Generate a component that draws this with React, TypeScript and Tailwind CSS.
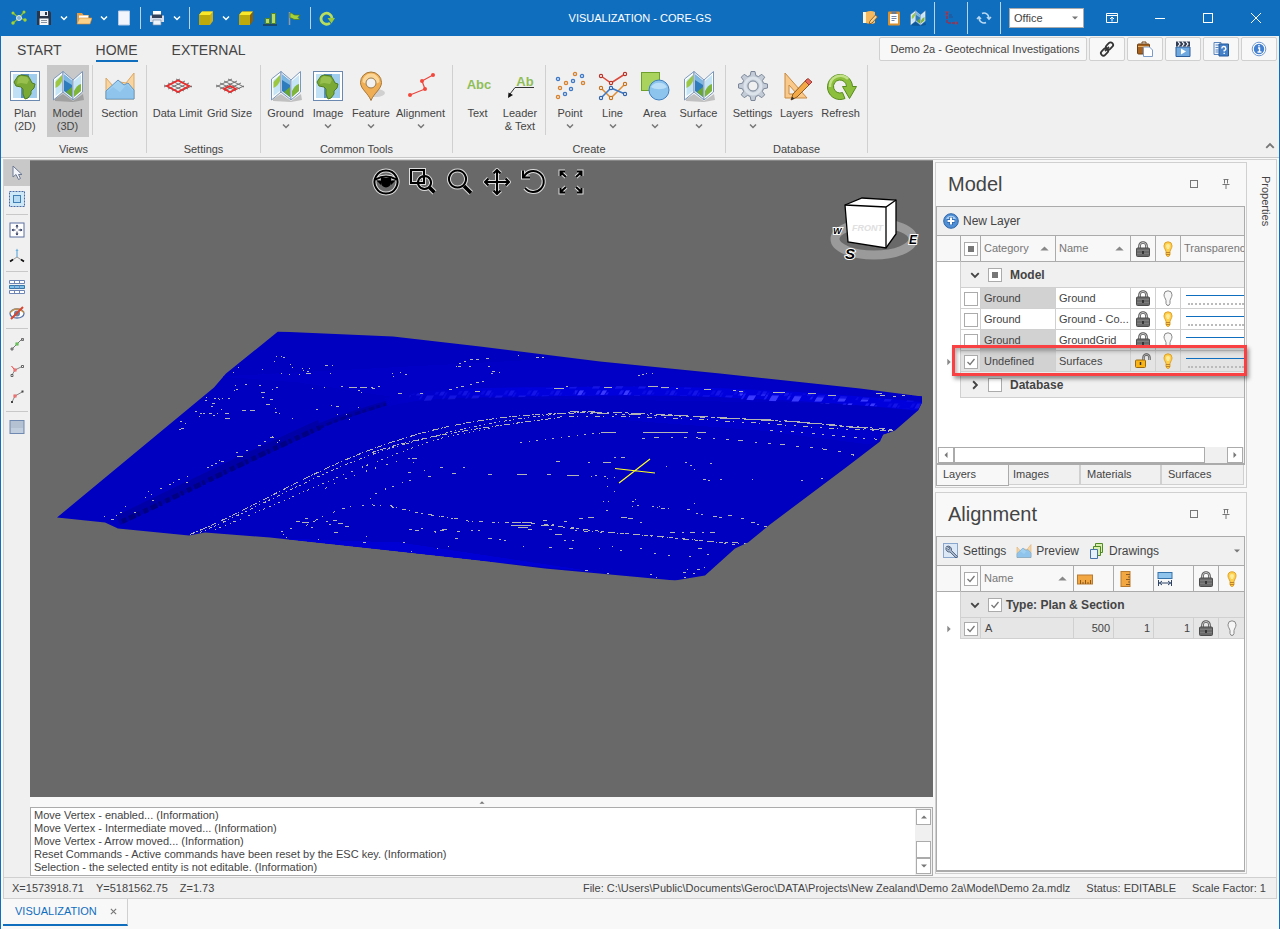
import React from "react";

type IconProps = { className?: string };

const Chevron = ({ className = "size-2" }: IconProps) => (
  <svg viewBox="0 0 8 8" className={className} fill="none" stroke="currentColor" strokeWidth="1.5">
    <path d="M1 2.5 4 5.5 7 2.5" />
  </svg>
);

const Arrow = ({ className }: IconProps) => (
  <svg viewBox="0 0 10 6" className={className} fill="currentColor">
    <path d="M0 5.5 5 .5l5 5z" />
  </svg>
);

/* ---------- ribbon icons ---------- */

const MapIcon = ({ className = "size-8" }: IconProps) => (
  <svg viewBox="0 0 32 32" className={className}>
    <path d="M3 29 L11 24 L21 31 L31 24 L32 30 L21 32 L3 31z" fill="#0003" />
    <path d="M1.5 9 11 1.5 V22 L1.5 30z" fill="#fafcfe" stroke="#7b97ba" />
    <path d="M11 1.5 21 10 V30 L11 22z" fill="#e6eef7" stroke="#7b97ba" />
    <path d="M21 10 30.5 1.5 V22 L21 30z" fill="#fafcfe" stroke="#7b97ba" />
    <path d="M3.500 10 10 5 V21 L3.500 26z" fill="#c5e4f6" />
    <path d="M3.500 12 10 5 V11 Q8 16 3.500 18z" fill="#9cc742" />
    <path d="M12 4.500 20 11 V27 L12 21z" fill="#2f7cbc" />
    <path d="M12 4.500 20 11 V15 L12 10z" fill="#7db8e3" />
    <path d="M22 11 29 5 V21 L22 27z" fill="#c5e4f6" />
    <path d="M22 21 Q25 15 29 14 V21 L22 27z" fill="#7fb53a" />
    <path d="M14 22 20 17 V27z" fill="#6aa634" />
  </svg>
);

const AfricaIcon = ({ className = "size-8" }: IconProps) => (
  <svg viewBox="0 0 32 32" className={className}>
    <rect x="1.500" y="1.500" width="29" height="29" fill="#fff" stroke="#6b88b0" />
    <rect x="4" y="4" width="24" height="24" fill="#9fcdee" />
    <path d="M4 4h8v24H4z" fill="#bfe0f5" />
    <path d="M12 4h8v24h-8z" fill="#5f93bf" />
    <path
      d="M9 6 12 5l7 1 2 3 2 4 3 1-1 4-3 3v3l-3 4-3 1-2-5v-5l-2-2-5-1-2-4z"
      fill="#7aa935"
      stroke="#4f7c20"
    />
    <path d="M9 8l3-2 6 1 2 3-2 4-6-1-4 1z" fill="#98c04e" />
  </svg>
);

const SectionIcon = ({ className = "size-8" }: IconProps) => (
  <svg viewBox="0 0 32 32" className={className}>
    <path d="M2 8 9 16 16 12 22 13 30 3V29H2z" fill="#f8d5a0" stroke="#dca763" />
    <path d="M2 21 14 10 20 15 24 13 30 20V29H2z" fill="#9fd0f2" stroke="#5d96c8" />
    <path d="M3 22 9 17 16 22 23 14 29 21V28H3z" fill="#86bde8" opacity=".6" />
  </svg>
);

// outer: the border of the whole grid is red, otherwise only one cell is
const GridIcon = ({ outer }: { outer?: boolean }) => (
  <svg viewBox="0 0 32 32" className="size-8" fill="none" stroke="#666" strokeWidth=".9">
    <path d="M2 17 18 9M6 19 23 11M10 21 27 13M14 23 30 16M2 15 18 23M6 13 22 21M10 11 26 19M14 9 30 17" />
    {outer ? (
      <path d="M5 16 16 10.500 27 16 16 22z" stroke="#ee2a2a" strokeWidth="1.600" />
    ) : (
      <path d="M10 19 16 16 22 19 16 22z" stroke="#ee2a2a" strokeWidth="1.600" />
    )}
  </svg>
);

const PinIcon = () => (
  <svg viewBox="0 0 32 32" className="size-8">
    <ellipse cx="21" cy="23" rx="9" ry="4" fill="#0002" />
    <path d="M16 30.500C13 23 5.500 19 5.500 12.500a10.500 10.500 0 0 1 21 0c0 6.500-7.500 10.500-10.500 18z" fill="#efae54" stroke="#a5773a" />
    <path d="M7.500 12a8.500 8.500 0 0 1 17 0c-4 3-13 3-17 0z" fill="#fad699" />
    <circle cx="16" cy="13" r="5" fill="#f2f2f2" stroke="#9a7a4a" />
  </svg>
);

const AlignmentIcon = () => (
  <svg viewBox="0 0 32 32" className="size-8">
    <path d="M5 25 20 19 17 11 28 5" fill="none" stroke="#e8453c" strokeWidth="1.200" />
    <g fill="#f4473c">
      <circle cx="5" cy="25" r="2" />
      <circle cx="20" cy="19" r="2" />
      <circle cx="17" cy="11" r="2" />
      <circle cx="28" cy="5" r="2" />
    </g>
  </svg>
);

const AbcIcon = () => (
  <svg viewBox="0 0 32 32" className="size-8">
    <text x="17" y="19" textAnchor="middle" fontSize="13" fontWeight="700" fill="#8fbe57" fontFamily="Liberation Sans, sans-serif">
      Abc
    </text>
  </svg>
);

const LeaderIcon = () => (
  <svg viewBox="0 0 32 32" className="size-8">
    <text x="21" y="16" textAnchor="middle" fontSize="13" fontWeight="700" fill="#8fbe57" fontFamily="Liberation Sans, sans-serif">
      Ab
    </text>
    <path d="M30 17.500H11L6 24" fill="none" stroke="#333" />
    <path d="M4 28 4.500 22.500 9 25z" fill="#111" />
  </svg>
);

const points: [number, number, string][] = [
  [4, 9, "#3f78c4"], [21, 4, "#d9822b"], [28, 6, "#3f78c4"], [12, 13, "#d9822b"], [19, 11, "#3f78c4"],
  [29, 13, "#d9822b"], [6, 18, "#d9822b"], [17, 19, "#3f78c4"], [4, 27, "#d9822b"], [11, 24, "#3f78c4"],
];

const PointIcon = () => (
  <svg viewBox="0 0 32 32" className="size-8">
    {points.map(([x, y, c]) => (
      <circle key={`${x}-${y}`} cx={x} cy={y} r="1.600" fill="#dfe8f4" stroke={c} strokeWidth="1.300" />
    ))}
  </svg>
);

const LineIcon = () => (
  <svg viewBox="0 0 32 32" className="size-8" fill="none" strokeWidth="1.500">
    <path d="M4 6 14 13 28 4" stroke="#d9493c" />
    <path d="M4 18 14 28 28 14" stroke="#e08d35" />
    <path d="M4 28 14 18 28 24" stroke="#3f78c4" />
    <g fill="#fff" strokeWidth="1.200">
      <g stroke="#b53228">
        <circle cx="4" cy="6" r="1.600" /><circle cx="14" cy="13" r="1.600" /><circle cx="28" cy="4" r="1.600" />
      </g>
      <g stroke="#c5721f">
        <circle cx="4" cy="18" r="1.600" /><circle cx="14" cy="28" r="1.600" /><circle cx="28" cy="14" r="1.600" />
      </g>
      <g stroke="#2f62a8">
        <circle cx="4" cy="28" r="1.600" /><circle cx="14" cy="18" r="1.600" /><circle cx="28" cy="24" r="1.600" />
      </g>
    </g>
  </svg>
);

const AreaIcon = () => (
  <svg viewBox="0 0 32 32" className="size-8">
    <rect x="2.500" y="2.500" width="18" height="18" fill="#a9d35c" stroke="#6fa02b" />
    <circle cx="20" cy="20" r="10" fill="#8cc4ee" stroke="#3f7fc0" />
    <path d="M12 17a9 8 0 0 1 16 0c-4 3-12 3-16 0z" fill="#b9def7" />
  </svg>
);

const GearIcon = () => (
  <svg viewBox="0 0 32 32" className="size-8">
    <g fill="#c3cbd6" stroke="#7b8798">
      <path d="M14 1.500h4l.8 4 2.600 1.100 3.400-2.300 2.900 2.900-2.300 3.400 1.100 2.600 4 .8v4l-4 .8-1.100 2.600 2.300 3.400-2.900 2.900-3.400-2.300-2.600 1.100-.8 4h-4l-.8-4-2.600-1.100-3.400 2.300-2.900-2.900 2.300-3.400-1.100-2.600-4-.8v-4l4-.8 1.100-2.600-2.300-3.400 2.900-2.900 3.400 2.300 2.600-1.100z" />
      <circle cx="16" cy="16" r="8" fill="none" stroke="#dde3ea" strokeWidth="3" />
      <circle cx="16" cy="16" r="5" fill="#f0f0f0" />
    </g>
  </svg>
);

const LayersIcon = () => (
  <svg viewBox="0 0 32 32" className="size-8">
    <path d="M4 3 26 28H4z" fill="#f9c98c" stroke="#c98a40" />
    <path d="M8 15 16 24H8z" fill="#f0f0f0" stroke="#c98a40" />
    <path d="M10 30 12 24 26 9 30 13 16 27z" fill="#f3a948" stroke="#8c5b22" />
    <path d="M24 11 27 8.500 31 12 28 15z" fill="#e46a5e" stroke="#a33d35" />
    <path d="M10 30 11 26.500 13.500 28.800z" fill="#333" />
  </svg>
);

const RefreshIcon = () => (
  <svg viewBox="0 0 32 32" className="size-8">
    <path
      d="M20 28.500A12.500 12.500 0 1 1 27.500 16.500H31.500L24.500 28.500 17.500 16.500H21.500A6.500 6.500 0 1 0 17.500 22.500z"
      fill="#8cbf3c"
      stroke="#568a1c"
    />
    <path d="M5 17a10.500 10.500 0 0 1 18-8" fill="none" stroke="#c3e187" strokeWidth="2.500" />
  </svg>
);

/* ---------- grid icons ---------- */

const Lock = () => (
  <svg viewBox="0 0 16 16" className="mx-auto size-4">
    <path d="M4.500 8V5a3.500 3.500 0 0 1 7 0v3" fill="none" stroke="#555" strokeWidth="2.600" />
    <path d="M4.500 8V5a3.500 3.500 0 0 1 7 0v3" fill="none" stroke="#ccc" />
    <rect x="1.500" y="7" width="13" height="8.500" rx="1" fill="#6b6b6b" stroke="#4c4c4c" />
    <path d="M2 9.500h12M2 12.500h12" stroke="#7d7d7d" />
    <path d="M8 10v3" stroke="#222" strokeWidth="1.500" />
  </svg>
);

const Unlock = () => (
  <svg viewBox="0 0 16 16" className="mx-auto size-4">
    <path d="M8.500 8V4.500a3 3 0 0 1 6 0V7" fill="none" stroke="#555" strokeWidth="2.400" />
    <path d="M8.500 8V4.500a3 3 0 0 1 6 0V7" fill="none" stroke="#ccc" strokeWidth=".8" />
    <rect x=".5" y="7" width="10" height="7.500" rx="1" fill="#fbb416" stroke="#9b6a10" />
    <path d="M5.500 9v3" stroke="#333" strokeWidth="1.500" />
  </svg>
);

const Bulb = ({ on }: { on?: boolean }) => (
  <svg viewBox="0 0 16 16" className="mx-auto size-4">
    <path
      d="M6 10.500C5.500 8.500 4 7 4 4.800a4 4 0 0 1 8 0c0 2.200-1.500 3.700-2 5.700v3L9 15.300H7l-1-1.800z"
      fill={on ? "#fdd04f" : "#f6f6f6"}
      stroke={on ? "#e0a22c" : "#888"}
    />
    {on && <path d="M6 5a2 2 0 0 1 4 0L9 8H7z" fill="#ffec9a" />}
    {on && <path d="M6 11.500h4M6 13.500h4" stroke="#c08428" />}
  </svg>
);

/* ---------- title bar ---------- */

const Sep = ({ className }: IconProps) => <span className={`w-px shrink-0 bg-white/70 ${className}`} />;

const ToolButton = ({ label, className = "w-6", children }: { label: string; className?: string; children: React.ReactNode }) => (
  <button type="button" aria-label={label} className={`flex h-full shrink-0 items-center justify-center ${className}`}>
    {children}
  </button>
);

const Cube = ({ side = "#8a7a06" }: { side?: string }) => (
  <svg viewBox="0 0 16 16" className="size-4">
    <path d="M1 5 4 1.500h11V11L12 15H1z" fill={side} />
    <path d="M1 5 4 1.500h11L12 5z" fill="#fbe72a" />
    <path d="M1 5h11v10H1z" fill="#bda90c" />
  </svg>
);

const TitleBar = () => (
  <header className="grid h-9 grid-cols-[1fr_auto_1fr] items-center bg-[#106ebe] text-white">
    <div className="flex h-full items-center pl-1.5">
      <ToolButton label="Network" className="w-[26px]">
        <svg viewBox="0 0 16 16" className="size-4">
          <path d="M8 8 2 3M8 8 13 2M8 8 2 13M8 8l7 2M8 8" stroke="#8fc31f" strokeWidth="1.200" />
          <circle cx="8" cy="8" r="2.500" fill="#7fb2df" stroke="#dceaf7" />
          <g fill="#a5d32a">
            <circle cx="2" cy="3" r="1.500" /><circle cx="13" cy="2" r="1.500" /><circle cx="2" cy="13" r="1.700" /><circle cx="14" cy="10" r="1.700" />
          </g>
        </svg>
      </ToolButton>
      <ToolButton label="Save">
        <svg viewBox="0 0 16 16" className="size-4">
          <path d="M1 1h12.500L15 2.500V15H1z" fill="#2a3647" />
          <path d="M4 1h8v5H4z" fill="#e8edf3" />
          <path d="M3.500 8.500h9V15h-9z" fill="#f4f6f8" />
          <path d="M5 10.500h6M5 12.500h6" stroke="#8793a3" />
          <path d="M9 2h2v3H9z" fill="#2a3647" />
        </svg>
      </ToolButton>
      <ToolButton label="Save options" className="w-4"><Chevron /></ToolButton>
      <ToolButton label="Open">
        <svg viewBox="0 0 16 16" className="size-4">
          <path d="M1 3h5l1.500 2H13v9H1z" fill="#e79a3c" />
          <path d="M3 5.500h9V9H3z" fill="#fff" />
          <path d="M3.500 8H16l-2 6H1z" fill="#fbd089" stroke="#d98b31" strokeWidth=".6" />
        </svg>
      </ToolButton>
      <ToolButton label="Open options" className="w-4"><Chevron /></ToolButton>
      <ToolButton label="New page">
        <svg viewBox="0 0 16 16" className="size-4"><path d="M2.500 1h11v14h-11z" fill="#f2f6fc" stroke="#b6cbe6" /></svg>
      </ToolButton>
      <Sep className="mx-1 h-[22px]" />
      <ToolButton label="Print">
        <svg viewBox="0 0 16 16" className="size-4">
          <path d="M4 1h8v5H4z" fill="#fff" />
          <path d="M1 5.500h14V12H1z" fill="#d5deea" />
          <path d="M3 4.500h10V8H3z" fill="#34425a" />
          <path d="M4 10h8v5H4z" fill="#eef3f9" stroke="#7d91ad" strokeWidth=".7" />
        </svg>
      </ToolButton>
      <ToolButton label="Print options" className="w-4"><Chevron /></ToolButton>
      <Sep className="mx-1 h-[22px]" />
      <ToolButton label="Solid"><Cube side="#c4b020" /></ToolButton>
      <ToolButton label="Solid options" className="w-4"><Chevron /></ToolButton>
      <ToolButton label="Block"><Cube side="#8a5f06" /></ToolButton>
      <ToolButton label="Bar chart">
        <svg viewBox="0 0 16 16" className="size-4">
          <path d="M3.500 8.500h4v5h-4zM9.500 3.500h4v10h-4z" fill="#b4db6c" stroke="#55851d" />
          <path d="M1 15h14" stroke="#222" />
        </svg>
      </ToolButton>
      <ToolButton label="Flag">
        <svg viewBox="0 0 16 16" className="size-4">
          <path d="M3.500 2v13" stroke="#8d9aa8" strokeWidth="1.500" />
          <path d="M4 3c3 0 3 2 5 2h5l-2 2.500 2 2H9C7 9.500 7 8 4 8z" fill="#a4d03c" stroke="#4e7a12" strokeWidth=".7" />
        </svg>
      </ToolButton>
      <Sep className="mx-1 h-[22px]" />
      <ToolButton label="Refresh">
        <svg viewBox="0 0 16 16" className="size-4">
          <path d="M11 13A5.500 5.500 0 1 1 13 8" fill="none" stroke="#b9dd5c" strokeWidth="2.800" />
          <path d="M8.500 8h7.500l-3.500 5.500z" fill="#9cca35" />
        </svg>
      </ToolButton>
    </div>

    <h1>VISUALIZATION - CORE-GS</h1>

    <div className="flex h-full items-center justify-end">
      <ToolButton label="Edit data">
        <svg viewBox="0 0 16 16" className="size-4">
          <path d="M1 2h7v11H1z" fill="#fff3d6" />
          <path d="M4 2q5-2 9 0v11q-4 2-9 0z" fill="#f4b95e" />
          <path d="M7 14 8 11 13.500 5 15.500 7 10 13z" fill="#f8d28c" stroke="#7b4f1c" strokeWidth=".8" />
        </svg>
      </ToolButton>
      <ToolButton label="Clipboard">
        <svg viewBox="0 0 16 16" className="size-4">
          <rect x="2" y="1.500" width="12" height="14" rx="1" fill="#d9902f" />
          <path d="M4 4h8v9.500H4z" fill="#fff" />
          <path d="M5.500 1h5v3h-5z" fill="#6c7c90" />
          <path d="M5.500 6.500h5M5.500 8.500h5M5.500 10.500h3" stroke="#7089ab" />
        </svg>
      </ToolButton>
      <ToolButton label="Map"><MapIcon className="size-4" /></ToolButton>
      <Sep className="ml-1 h-8" />
      <ToolButton label="Legend" className="w-8">
        <svg viewBox="0 0 16 16" className="size-4" fill="none">
          <path d="M4 2v11h11" stroke="#95304c" strokeWidth="1.500" strokeDasharray="3 1" />
          <path d="M6 7h4M6 5h3" stroke="#2c4f8c" />
          <path d="M2 2h4M2 5h3M13 11v4" stroke="#b03a4b" />
        </svg>
      </ToolButton>
      <Sep className="h-8" />
      <ToolButton label="Sync" className="w-8">
        <svg viewBox="0 0 16 16" className="size-4" fill="none" stroke="#b9d8f2" strokeWidth="1.600">
          <path d="M6 3.500A5 5 0 0 1 13 8M10 12.500A5 5 0 0 1 3 8" />
          <path d="M11 7l2 2 2-2M1 9l2-2 2 2" />
        </svg>
      </ToolButton>
      <Sep className="mr-2 h-8" />
      <label className="relative mr-1 block">
        <span className="sr-only">Theme</span>
        <select className="block h-5 w-[75px] appearance-none border border-[#ababab] bg-white pl-1 text-[#444]" defaultValue="Office">
          <option>Office</option>
        </select>
        <Arrow className="pointer-events-none absolute top-2 right-1.5 h-1 w-1.5 rotate-180 text-[#777]" />
      </label>
      <ToolButton label="Ribbon display" className="w-12">
        <svg viewBox="0 0 12 12" className="size-3" fill="none" stroke="currentColor">
          <path d="M.5 1.500h11v9H.5zM.5 3.500h11M6 9.500V5M4 7l2-2 2 2" />
        </svg>
      </ToolButton>
      <ToolButton label="Minimize" className="w-12"><span className="h-px w-2.5 bg-white" /></ToolButton>
      <ToolButton label="Maximize" className="w-12"><span className="size-2.5 border border-white" /></ToolButton>
      <ToolButton label="Close" className="w-12">
        <svg viewBox="0 0 10 10" className="size-2.5" stroke="currentColor"><path d="M0 0 10 10M10 0 0 10" /></svg>
      </ToolButton>
    </div>
  </header>
);

/* ---------- ribbon ---------- */

const RibbonButton = ({
  icon,
  label,
  className,
  menu,
  active,
}: {
  icon: React.ReactNode;
  label: React.ReactNode;
  className: string;
  menu?: boolean;
  active?: boolean;
}) => (
  <button
    type="button"
    className={`flex h-[72px] shrink-0 flex-col items-center pt-[5px] leading-[13px] whitespace-nowrap ${className} ${active ? "bg-[#c8c8c8]" : ""}`}
  >
    {icon}
    <span className="mt-[5px]">{label}</span>
    {menu && <Chevron className="mt-0.5 size-2 text-[#777]" />}
  </button>
);

const Group = ({ title, children, className = "" }: { title: string; children: React.ReactNode; className?: string }) => (
  <section className={`flex h-[88px] flex-col border-r border-[#d0d0d0] ${className}`}>
    <div className="flex h-[76px] shrink-0 justify-center">{children}</div>
    <h2 className="text-center leading-4">{title}</h2>
  </section>
);

const ShortSep = () => <span className="mx-[3px] h-[70px] w-px shrink-0 bg-[#d0d0d0]" />;

const projectButton = "flex h-6 items-center justify-center rounded-xs border border-[#d0d0d0] bg-[#f8f8f8]";

const Ribbon = () => (
  <div className="border-b border-[#c8c8c8] bg-[#f0f0f0]">
    <div className="flex h-[29px] items-start justify-between pr-0.5">
      <nav className="flex gap-[34px] pl-4 text-sm leading-5">
        <a href="#start" className="pt-1">START</a>
        <a href="#home" className="border-b-2 border-[#106ebe] pt-1">HOME</a>
        <a href="#external" className="pt-1">EXTERNAL</a>
      </nav>
      <div className="flex gap-0.5 pt-px">
        <button type="button" className={`${projectButton} w-52 pl-1`}>Demo 2a - Geotechnical Investigations</button>
        <button type="button" aria-label="Link" className={`${projectButton} w-9`}>
          <svg viewBox="0 0 16 16" className="size-4" fill="none" stroke="#333" strokeWidth="1.800">
            <rect x="8" y="1" width="5" height="8" rx="2.500" transform="rotate(45 10.500 5)" />
            <rect x="3" y="7" width="5" height="8" rx="2.500" transform="rotate(45 5.500 11)" />
            <path d="M6 10 10 6" />
          </svg>
        </button>
        <button type="button" aria-label="Paste project" className={`${projectButton} w-9`}>
          <svg viewBox="0 0 16 16" className="size-4">
            <path d="M5 2.500V1h4v1.500" fill="none" stroke="#6b3f12" />
            <rect x=".5" y="3" width="12" height="10" rx="1" fill="#a8621f" stroke="#6b3f12" />
            <path d="M1 5.500h11" stroke="#e9b36a" />
            <path d="M6.500 6h6l3 3v6.500h-9z" fill="#fff" stroke="#7b9cc8" />
          </svg>
        </button>
        <button type="button" aria-label="Videos" className={`${projectButton} w-9`}>
          <svg viewBox="0 0 16 16" className="size-4">
            <path d="M1 6h14v9.500H1z" fill="#6fa8df" stroke="#2d5f9c" />
            <path d="M1 .5h14v5H1z" fill="#2f3b52" />
            <path d="M3 .5 5 3 3 5.500M7 .5 9 3 7 5.500M11 .5l2 2.500-2 2.500" stroke="#fff" fill="none" strokeWidth="1.200" />
            <path d="M6 7.500v6l5-3z" fill="#fff" />
          </svg>
        </button>
        <button type="button" aria-label="Help" className={`${projectButton} w-9`}>
          <svg viewBox="0 0 16 16" className="size-4">
            <path d="M1 1.500h7v12H1z" fill="#eef4fb" stroke="#5c86bb" />
            <path d="M2.500 4h4M2.500 6.500h3M2.500 9h3M2.500 11h3" stroke="#5c86bb" />
            <path d="M6 3h9.500v12H6z" fill="#4481c9" stroke="#25589a" />
            <path d="M8.800 7.500a2 2 0 1 1 2.400 2v1M11.200 11.800v1.200" fill="none" stroke="#fff" strokeWidth="1.400" />
          </svg>
        </button>
        <button type="button" aria-label="About" className={`${projectButton} w-9`}>
          <svg viewBox="0 0 16 16" className="size-4">
            <circle cx="8" cy="8" r="6.800" fill="#fff" stroke="#6f98cf" />
            <circle cx="8" cy="8" r="5.200" fill="#4380cf" />
            <path d="M7 7h1.500v4M6.500 11h4M8 4v1.500" fill="none" stroke="#fff" strokeWidth="1.400" />
          </svg>
        </button>
      </div>
    </div>

    <div className="flex h-[92px] items-start">
      <Group title="Views" className="w-[146px]">
        <RibbonButton className="w-[43px]" icon={<AfricaIcon />} label={<>Plan<br />(2D)</>} />
        <RibbonButton className="w-[42px]" icon={<MapIcon />} label={<>Model<br />(3D)</>} active />
        <ShortSep />
        <RibbonButton className="w-[48px]" icon={<SectionIcon />} label="Section" />
      </Group>
      <Group title="Settings" className="w-[114px]">
        <RibbonButton className="w-[52px]" icon={<GridIcon outer />} label="Data Limit" />
        <RibbonButton className="w-[52px]" icon={<GridIcon />} label="Grid Size" />
      </Group>
      <Group title="Common Tools" className="w-48">
        <RibbonButton className="w-[42px]" icon={<MapIcon />} label="Ground" menu />
        <RibbonButton className="w-[43px]" icon={<AfricaIcon />} label="Image" menu />
        <RibbonButton className="w-[43px]" icon={<PinIcon />} label="Feature" menu />
        <RibbonButton className="w-[56px]" icon={<AlignmentIcon />} label="Alignment" menu />
      </Group>
      <Group title="Create" className="w-[273px]">
        <RibbonButton className="w-[42px]" icon={<AbcIcon />} label="Text" />
        <RibbonButton className="w-[43px]" icon={<LeaderIcon />} label={<>Leader<br />&amp; Text</>} />
        <ShortSep />
        <RibbonButton className="w-[43px]" icon={<PointIcon />} label="Point" menu />
        <RibbonButton className="w-[42px]" icon={<LineIcon />} label="Line" menu />
        <RibbonButton className="w-[42px]" icon={<AreaIcon />} label="Area" menu />
        <RibbonButton className="w-[46px]" icon={<MapIcon />} label="Surface" menu />
      </Group>
      <Group title="Database" className="w-[142px]">
        <RibbonButton className="w-[46px]" icon={<GearIcon />} label="Settings" menu />
        <RibbonButton className="w-[42px]" icon={<LayersIcon />} label="Layers" />
        <RibbonButton className="w-[46px]" icon={<RefreshIcon />} label="Refresh" />
      </Group>
      <button type="button" aria-label="Collapse ribbon" className="mr-1 ml-auto self-end pb-1.5">
        <Chevron className="size-2.5 rotate-180 text-[#777]" />
      </button>
    </div>
  </div>
);

/* ---------- left tools ---------- */

const SideButton = ({ label, active, children }: { label: string; active?: boolean; children: React.ReactNode }) => (
  <button
    type="button"
    aria-label={label}
    className={`flex h-[26px] items-center justify-center ${active ? "bg-[#c8c8c8]" : ""}`}
  >
    <svg viewBox="0 0 16 16" className="size-4" fill="none">{children}</svg>
  </button>
);

const SideSep = () => <span className="mx-0.5 my-0.5 h-px bg-[#c8c8c8]" />;

const SideTools = () => (
  <aside className="flex w-[26px] shrink-0 flex-col bg-[#f0f0f0]">
    <SideButton label="Select" active>
      <path d="M4 1v11l3-2.500 2.500 5 2-1L9.500 9.500H13z" fill="#f2f5fa" stroke="#6d7993" />
    </SideButton>
    <SideButton label="Select window">
      <rect x=".5" y=".5" width="15" height="15" fill="#cfe8f7" stroke="#4a6aa5" strokeDasharray="2 1" />
      <rect x="4.500" y="4.500" width="7" height="7" fill="#b8dcf3" stroke="#3f7fb5" />
    </SideButton>
    <SideSep />
    <SideButton label="Pan">
      <rect x="1" y="1" width="14" height="14" fill="#fff" stroke="#5b6f9e" />
      <path d="M8 3v3.500M8 9.500V13M3 8h3.500M9.500 8H13" stroke="#2b3558" />
      <path d="M6.500 4.500 8 2.500l1.500 2zM6.500 11.500 8 13.500l1.500-2zM4.500 6.500 2.500 8l2 1.500zM11.500 6.500 13.500 8l-2 1.500z" fill="#2b3558" />
    </SideButton>
    <SideButton label="Axes">
      <path d="M8 9V2" stroke="#6fb2de" strokeWidth="1.300" />
      <path d="M8 9 2 13M8 9l6 4" stroke="#999" />
      <path d="M1 13.500 4 11.500M15 13.500 12 11.500" stroke="#111" strokeWidth="1.600" />
      <path d="M6.500 3 8 .5 9.500 3z" fill="#6fb2de" />
    </SideButton>
    <SideSep />
    <SideButton label="Rows">
      <path d="M.5 1.500h15v3H.5zM.5 11.500h15v3H.5z" fill="#fff" stroke="#6d86b5" />
      <path d="M.5 6.500h15v3H.5z" fill="#7cc0ea" stroke="#3877a8" />
      <path d="M5.500 1.500v3M10.500 1.500v3M5.500 6.500v3M10.500 6.500v3M5.500 11.500v3M10.500 11.500v3" stroke="#6d86b5" />
    </SideButton>
    <SideButton label="Hide">
      <ellipse cx="8" cy="8.500" rx="7" ry="4.500" fill="#fff" stroke="#5a76a8" strokeWidth="1.300" />
      <path d="M1 7.500Q8 .5 15 7.500" stroke="#c0924f" strokeWidth="1.600" />
      <circle cx="8" cy="8.500" r="3" fill="#6f83a3" />
      <path d="M2 14 14 2" stroke="#d9452f" strokeWidth="2" />
    </SideButton>
    <SideSep />
    <SideButton label="Intermediate vertex">
      <path d="M3 13 13 3" stroke="#777" />
      <path d="M2 12h2v2H2zM12.500 2.500h2v2h-2z" fill="#bbb" stroke="#555" strokeWidth=".8" />
      <rect x="7" y="7" width="2" height="2" fill="#b8efaa" stroke="#4caf3c" />
    </SideButton>
    <SideButton label="Move vertex">
      <path d="M3 13 6 8 14 4" stroke="#888" />
      <path d="M2 12.500h2v2H2zM12.500 3.500h2v2h-2z" fill="#fff" stroke="#444" strokeWidth=".8" />
      <path d="M6 8 2.500 4" stroke="#e33" />
      <rect x="5" y="7" width="2" height="2" fill="#fbb" stroke="#e85a5a" />
    </SideButton>
    <SideButton label="Delete vertex">
      <path d="M3 14 6 8 14 3.500" stroke="#888" />
      <path d="M2 13h2v2H2zM12.500 2.500h2v2h-2z" fill="#444" />
      <rect x="5" y="7" width="2" height="2" fill="#fbb" stroke="#e85a5a" />
    </SideButton>
    <SideSep />
    <SideButton label="Fill">
      <rect x="1" y="1.500" width="14" height="13" fill="#b3c1d2" stroke="#7089b0" />
      <path d="M2 9h12v5H2z" fill="#c0cedd" />
    </SideButton>
  </aside>
);

/* ---------- 3D view ---------- */

// Isolated specks where the base surface shows through
const specks = [
  "M276 355h1M281 355h1M283 356h2M274 360h1M290 363h1M292 366h1M302 367h1M303 369h1M307 370h2M309 367h1M306 372h5M299 373h1M289 373h1M281 372h1M262 368h1M325 364h3M332 364h1M330 372h1M392 372h1M393 375h1M400 371h1M405 373h2",
  "M238 366h1M233 371h1M245 383h2M235 384h1M236 388h2M234 389h1M259 384h2M261 391h4M262 396h2M272 388h1M276 386h2M270 398h3M266 403h4M242 409h4M250 409h5M275 411h2M279 412h1M275 407h1M292 417h1M312 387h1M324 386h1M341 385h2M349 386h8M360 386h7M372 387h3M358 389h2M361 391h1M371 386h2M378 385h2M336 405h3M331 404h1M316 408h2M337 413h1M346 413h1M349 418h1M358 406h1M398 392h4M420 392h3M475 390h5",
  "M206 396h1M205 399h2M214 397h2M219 398h1M222 397h1M212 402h3M195 410h2M200 412h2M203 412h2M209 412h3M213 414h2M217 412h1M225 412h4M225 417h2M227 417h3M218 397h1M228 397h2M211 405h2M221 408h1M199 415h1M180 420h2M181 427h3M179 428h2M185 422h1",
  "M236 451h1M237 455h6M246 449h2M258 444h3M264 440h2M270 436h4M272 435h1M277 441h1M279 439h1M236 451h2M207 466h2M211 464h2M215 462h2M219 459h1M221 460h3M187 475h1M186 481h2M169 483h2M173 481h1M178 478h2M160 487h2M145 496h1M151 493h1M152 499h2M111 518h3M116 514h1M120 511h2M125 505h1M104 515h1M134 511h2M148 490h1",
  "M459 362h2M464 360h2M470 358h3M476 358h3M456 365h1M458 365h3M469 365h2M486 357h3M488 365h2M492 370h3M491 372h2M499 371h1M518 354h1M536 356h3M542 356h2M638 374h2M642 373h2M646 372h1M652 372h1M554 387h10M566 385h2M604 386h8M648 385h10M661 386h8M676 387h2M704 388h7M733 389h3M739 390h4M773 391h12M808 392h8M828 394h8M876 392h6M880 394h5M902 394h3M893 395h3",
  "M449 388h3M456 386h2M461 385h3M470 383h2M476 381h3M482 380h2",
  "M412 457h5M413 461h1M408 471h3M440 466h3M424 469h1M428 475h3M452 472h4M463 466h2M488 473h4M517 473h10M547 473h4M567 474h12M591 475h1M595 474h2M604 475h2M607 477h1M614 476h1M607 485h1M614 490h1M608 500h1M603 500h1M606 509h2M614 456h2M621 456h4M556 460h4M603 461h8M588 461h2M666 465h1M685 461h2M690 464h2M694 468h1M710 462h2M703 478h3M708 479h2M720 478h2M752 478h1M801 479h2M821 477h2M833 477h2",
  "M286 536h1M281 530h2M283 533h1M290 527h2M296 520h4M302 521h7M305 517h3M311 526h2M313 520h2M326 520h2M333 519h4M338 522h5M345 525h4M329 523h2M334 531h4M318 538h1M363 541h3M366 535h1M403 541h2M409 528h3M415 529h4M421 527h2M435 531h1M440 529h4M434 530h2M442 528h5M455 537h3M457 530h3M471 529h2M478 529h2M437 547h1M411 550h1M448 545h1",
  "M511 524h20M512 521h8M522 521h10M543 519h4M518 526h10M528 528h4M541 524h7M552 523h2M549 528h3M555 533h7M564 520h3M571 526h3M588 516h6M579 517h4M621 516h6M628 517h5M640 521h2M632 500h2M635 498h1M637 504h2M632 505h1M652 505h2M657 506h1M659 505h1M661 507h4M668 507h1M687 508h3M694 502h1M696 512h2M701 513h2M713 515h4M719 516h3M728 514h4M741 517h3M751 521h4M757 523h2M764 525h3",
  "M488 537h4M499 538h2M504 539h2M523 545h1M549 546h3M569 547h4M564 539h2M572 539h2M599 547h1M620 549h2M612 545h1M640 547h2M654 552h2M668 554h2M689 555h2M698 547h4M707 553h2M585 569h3M607 572h2M650 573h2M656 576h1M683 571h3M684 576h2M687 568h1M693 572h2M697 568h3M704 566h1M689 577h2",
];

// Rows of specks that follow the road edges
const edges = [
  { d: "M190 534 C260 505 310 470 385 444 S520 413 600 412", dash: "5 2 1 3 7 2 2 1" },
  { d: "M200 532 C270 502 330 465 400 445 S500 420 570 412", dash: "2 3 1 4 3 2" },
  { d: "M215 529 C280 503 330 478 400 452 S440 441 500 425", dash: "1 3 2 5 1 4" },
  { d: "M372 452 C420 436 480 427 560 417", dash: "4 1 2 2 6 3 1 2" },
  { d: "M570 411 C640 412 700 416 770 420 S850 428 893 430", dash: "9 3 4 2 14 5 2 4" },
  { d: "M590 413 C650 414 710 417 780 420", dash: "3 4 12 6 2 5" },
  { d: "M560 416 C640 415 710 419 790 425 S860 428 892 431", dash: "2 7 5 3 1 8" },
  { d: "M720 418 C780 418 820 424 892 429", dash: "6 4 10 3 3 6" },
  { d: "M770 430 C800 431 840 437 885 439", dash: "3 7 2 9" },
  { d: "M643 432H708", dash: "45 9 9 20" },
  { d: "M601 432H616", dash: "15" },
  { d: "M520 442 C550 438 580 434 600 433", dash: "2 7 1 6" },
  { d: "M642 438 C700 435 740 440 800 446 S830 452 865 456", dash: "3 9 5 12 2 11" },
  { d: "M306 525 C330 512 350 502 380 505 S400 511 460 519", dash: "2 8 3 5 1 11" },
  { d: "M390 505 C420 515 440 514 460 519 S500 519 545 524", dash: "3 3 1 6 4 9" },
  { d: "M545 524 C590 531 640 534 680 538 S710 541 748 543", dash: "4 2 3 4 7 5" },
  { d: "M575 530 C630 533 670 537 735 544", dash: "2 6 5 4 1 7" },
  { d: "M325 488 C350 475 380 465 414 457", dash: "2 8 1 11" },
  { d: "M370 498 C375 490 400 484 415 478", dash: "1 6 2 9" },
  { d: "M670 532H720", dash: "5 7 2 6" },
];

const Surface = () => (
  <svg viewBox="30 160 903 637" preserveAspectRatio="xMidYMid slice" className="absolute inset-0 h-full w-full">
    <defs>
      <clipPath id="surface">
        <path d="M57 517 214 387 226 373 278 331 393 336 480 346 600 361 720 373 860 388 922 396V402L918 410 895 430 883 434 880 441 846 467 770 524 748 542 735 548 725 557 705 575 675 580 610 574 545 568 480 560 390 550 270 537 205 532 189 535 118 528 105 522z" />
      </clipPath>
      <linearGradient id="lit" gradientUnits="userSpaceOnUse" x1="380" y1="0" x2="520" y2="0">
        <stop offset="0" stopColor="#0000c4" />
        <stop offset="1" stopColor="#0000dc" />
      </linearGradient>
      <pattern id="shade" width="23" height="13" patternUnits="userSpaceOnUse" patternTransform="skewX(-30)">
        <path d="M0 0h4v5H0zM11 5h7v6h-7z" fill="#3a3aff" />
        <path d="M5 2h2v7H5zM18 0h3v4h-3z" fill="#1c1cf0" />
      </pattern>
    </defs>
    <g clipPath="url(#surface)" shapeRendering="crispEdges">
      <path d="M40 320h900v270H40z" fill="#0000c0" />
      <path d="M220 376 300 382 390 396 920 404 922 396 560 358z" fill="#0000c6" />
      <path d="M590 417 700 416 893 432 870 444 760 430z" fill="#0000cb" />
      <path d="M280 538 400 542 600 572 480 560z" fill="#0000d4" />
      <g fill="none" shapeRendering="auto">
        <path d="M118 520 C180 490 240 460 320 424" stroke="#0000a8" strokeWidth="10" />
        <path d="M320 425 C350 413 370 408 388 402" stroke="#0000aa" strokeWidth="5" />
        <path d="M122 521 C180 495 240 463 320 427" stroke="#000084" strokeWidth="5" strokeDasharray="5 3 7 2 3 4" />
        <path d="M320 427 C350 414 370 409 388 403" stroke="#000090" strokeWidth="3" strokeDasharray="4 3 6 2" />
        <path d="M386 402 C430 390 500 392 560 391 S640 390 680 391 S820 396 922 406" stroke="url(#lit)" strokeWidth="9" />
        <path d="M410 398 C440 393 500 394 560 391 S640 390 680 391 S820 398 922 405" stroke="url(#shade)" strokeWidth="8" opacity=".35" />
        <path d="M575 392 C600 391 620 391 640 392M740 396 C780 398 840 401 880 403" stroke="url(#shade)" strokeWidth="6" />
      </g>
      <g fill="none" stroke="#b4b4b4">
        {edges.map((edge) => (
          <path key={edge.d} d={edge.d} strokeDasharray={edge.dash} />
        ))}
        {specks.map((d) => (
          <path key={d} d={d} transform="translate(0 .5)" />
        ))}
      </g>
    </g>
    <path d="M615 468 655 472.500M619 482.500 650 458.500" stroke="#ffff20" strokeWidth="1.200" />
  </svg>
);

const viewTools: { label: string; d: string; handle?: string; fill?: string }[] = [
  { label: "View", d: "M13 1.500a11.500 11.500 0 1 0 .01 0M2.500 10.500q10.500-6 21 0", fill: "M8 9h10v4.500a5 5 0 0 1-10 0zM3 11l5 1v4zM23 11l-5 1v4z" },
  { label: "Zoom window", d: "M7 14H1V1h13v5M14.500 7a6.500 6.500 0 1 0 .01 0M7 14h7V7", handle: "M19.500 18.500l5 5" },
  { label: "Zoom", d: "M10.500 1.500a8.500 8.500 0 1 0 .01 0", handle: "M17 17l7 7" },
  { label: "Pan view", d: "M13 1v24M1 13h24M9.500 4.500 13 1l3.500 3.500M9.500 21.500 13 25l3.500-3.500M4.500 9.500 1 13l3.500 3.500M21.500 9.500 25 13l-3.500 3.500" },
  { label: "Rotate view", d: "M3 7.500A10.500 10.500 0 1 1 4 19M2 1.500v7h7" },
  { label: "Fit view", d: "M8 8 2.500 3M2.500 7V2.500H7M18 8l5.500-5M19 2.500h4.500V7M8 18l-5.500 5M2.500 19v4.500H7M18 18l5.500 5M23.500 19v4.500H19" },
];

const ViewCube = () => (
  <svg viewBox="0 0 92 68" className="absolute top-[35px] right-[11px] h-[68px] w-[92px]">
    <ellipse cx="44" cy="43" rx="39" ry="16" fill="none" stroke="#9a9a9a" strokeWidth="9" />
    <path d="M15 9 32 2 66 4V38L56 52 18 46z" fill="#fff" stroke="#000" strokeWidth="1.300" />
    <path d="M15 9 56 11 66 4M56 11V52" fill="none" stroke="#000" strokeWidth="1.300" />
    <g fontFamily="Liberation Sans, sans-serif" fontWeight="700" fontStyle="italic">
      <text x="22" y="35" fontSize="9" fill="#e0e0e0">FRONT</text>
      <g stroke="#fff" strokeWidth="2" paintOrder="stroke">
        <text x="3" y="38" fontSize="9">W</text>
        <text x="15" y="63" fontSize="15">S</text>
        <text x="79" y="48" fontSize="12">E</text>
      </g>
    </g>
  </svg>
);

const View3D = () => (
  <div className="relative min-h-[637px] flex-1 overflow-hidden border-t border-[#888] bg-[#696969]">
    <Surface />
    <div className="absolute inset-x-0 top-[5px] flex justify-center pr-1.5">
      {viewTools.map((tool) => (
        <button key={tool.label} type="button" aria-label={tool.label} className="flex h-8 w-[37px] items-center justify-center">
          <svg viewBox="-1 -1 28 28" className="size-7" fill="none">
            <path d={tool.d} stroke="#ddd" strokeWidth="4" />
            {tool.handle && <path d={tool.handle} stroke="#ddd" strokeWidth="5.500" />}
            <path d={tool.d} stroke="#000" strokeWidth="2" />
            {tool.handle && <path d={tool.handle} stroke="#000" strokeWidth="3.500" />}
            {tool.fill && <path d={tool.fill} fill="#000" />}
          </svg>
        </button>
      ))}
    </div>
    <ViewCube />
  </div>
);

const log = [
  "Move Vertex - enabled... (Information)",
  "Move Vertex - Intermediate moved... (Information)",
  "Move Vertex - Arrow moved... (Information)",
  "Reset Commands - Active commands have been reset by the ESC key. (Information)",
  "Selection - the selected entity is not editable. (Information)",
];

const scrollButton = "flex shrink-0 items-center justify-center border border-[#ababab] bg-white text-[#777]";

const Log = () => (
  <div className="flex border border-[#ababab] bg-white">
    <ul className="flex-1 py-px pl-[3px] leading-[13px]">
      {log.map((line) => (
        <li key={line}>{line}</li>
      ))}
    </ul>
    <div className="flex w-[17px] flex-col bg-[#f0f0f0] px-px py-px">
      <button type="button" aria-label="Scroll up" className={`${scrollButton} h-4`}><Arrow className="h-1 w-1.5" /></button>
      <span className="mt-auto h-[17px] border border-[#ababab] bg-white" />
      <button type="button" aria-label="Scroll down" className={`${scrollButton} h-4`}><Arrow className="h-1 w-1.5 rotate-180" /></button>
    </div>
  </div>
);

/* ---------- right panels ---------- */

const Check = ({ state = "off", label }: { state?: "on" | "off" | "mixed"; label: string }) => (
  <span className="inline-grid size-3.5 place-items-center align-middle">
    <input
      type="checkbox"
      aria-label={label}
      defaultChecked={state === "on"}
      className="col-start-1 row-start-1 size-3.5 appearance-none border border-[#ababab] bg-white"
    />
    {state === "mixed" && <span className="pointer-events-none col-start-1 row-start-1 size-1.5 bg-[#777]" />}
    {state === "on" && (
      <svg viewBox="0 0 10 10" className="pointer-events-none col-start-1 row-start-1 size-2.5" fill="none" stroke="#777" strokeWidth="1.300">
        <path d="M1.500 5 4 7.500 8.500 2" />
      </svg>
    )}
  </span>
);

const Panel = ({ title, className = "", children }: { title: string; className?: string; children: React.ReactNode }) => (
  <section className={`flex flex-col border border-[#d0d0d0] bg-[#f8f8f8] ${className}`}>
    <div className="flex h-[43px] shrink-0 items-center pr-4 pb-0.5 pl-3">
      <h2 className="mr-auto text-xl">{title}</h2>
      <button type="button" aria-label={`Maximize ${title}`} className="mr-6 size-2 border border-[#777]" />
      <button type="button" aria-label={`Pin ${title}`}>
        <svg viewBox="0 0 8 10" className="h-2.5 w-2" fill="none" stroke="#777">
          <path d="M1.500.5h5M2.500.5v4M5.500.5v4M.5 5.500h7M4 5.500V10" />
        </svg>
      </button>
    </div>
    {children}
  </section>
);

const SortLabel = ({ children }: { children: React.ReactNode }) => (
  <span className="flex items-center justify-between pr-1.5 pl-[3px] font-normal">
    {children}
    <Arrow className="h-[5px] w-[9px] text-[#888]" />
  </span>
);

const headCell = "h-[25px] border-r border-[#ababab] p-0 font-normal text-[#777]";
const cell = "h-[21px] border-r border-b border-[#d0d0d0] p-0";

const layers = [
  { category: "Ground", name: "Ground", on: false, shaded: true },
  { category: "Ground", name: "Ground - Co...", on: true, shaded: false },
  { category: "Ground", name: "GroundGrid", on: false, shaded: true },
  { category: "Undefined", name: "Surfaces", on: true, shaded: true, selected: true },
];

const panelTab = "h-5 border-b border-[#d0d0d0] bg-[#f0f0f0] text-left";

const ModelPanel = () => (
  <Panel title="Model">
    <div className="mr-px flex h-[30px] items-center border border-[#ababab] bg-[#f0f0f0] pl-1.5">
      <button type="button" className="flex items-center gap-1 text-xs">
        <svg viewBox="0 0 16 16" className="size-4">
          <circle cx="8" cy="8" r="7.300" fill="#4f8fd6" stroke="#2f66a8" />
          <path d="M3 6a5.500 5.500 0 0 1 10 0z" fill="#a9cdf0" />
          <path d="M8 4v8M4 8h8" stroke="#2f66a8" strokeWidth="3.400" />
          <path d="M8 4.500v7M4.500 8h7" stroke="#fff" strokeWidth="2" />
        </svg>
        New Layer
      </button>
    </div>
    <div className="relative mr-px flex h-[229px] flex-col border-x border-b-2 border-[#ababab] bg-white">
      <table className="w-full table-fixed border-separate border-spacing-0 text-left">
        <colgroup>
          <col className="w-6" />
          <col className="w-5" />
          <col className="w-[75px]" />
          <col className="w-[75px]" />
          <col className="w-[25px]" />
          <col className="w-[25px]" />
          <col />
        </colgroup>
        <thead className="bg-[#f8f8f8]">
          <tr>
            <th className={headCell} aria-label="Row" />
            <th className={`${headCell} text-center`}><Check state="mixed" label="All layers" /></th>
            <th className={headCell}><SortLabel>Category</SortLabel></th>
            <th className={headCell}><SortLabel>Name</SortLabel></th>
            <th className={headCell}><Lock /></th>
            <th className={headCell}><Bulb on /></th>
            <th className="overflow-hidden p-0 pl-[3px] font-normal whitespace-nowrap text-[#777]">Transparency</th>
          </tr>
        </thead>
        <tbody>
          <tr>
            <td className="h-[27px] border-t border-r border-t-[#ababab] border-r-[#d0d0d0]" />
            <td colSpan={6} className="border-t border-b border-t-[#ababab] border-b-[#d0d0d0] bg-[#f0f0f0] p-0">
              <div className="flex items-center gap-2 pl-[9px] text-xs font-bold">
                <Chevron className="size-2.5" />
                <Check state="mixed" label="Model" />
                Model
              </div>
            </td>
          </tr>
          {layers.map((layer) => (
            <tr key={layer.category + layer.name} className={layer.selected ? "bg-[#e4e4e4]" : ""}>
              <td className="border-r border-[#d0d0d0] bg-white p-0">
                {layer.selected && <Arrow className="mx-auto h-1 w-2 rotate-90 text-[#888]" />}
              </td>
              <td className={`${cell} text-center`}>
                <Check state={layer.selected ? "on" : "off"} label={`Show ${layer.name}`} />
              </td>
              <td className={`${cell} pl-[3px] ${layer.shaded ? "bg-[#d2d2d2]" : ""}`}>{layer.category}</td>
              <td className={`${cell} pl-[3px] whitespace-nowrap`}>{layer.name}</td>
              <td className={cell}>{layer.selected ? <Unlock /> : <Lock />}</td>
              <td className={cell}><Bulb on={layer.on} /></td>
              <td className="border-b border-[#d0d0d0] p-0 pl-[5px]">
                <div className="mt-1 h-0.5 border-t border-[#106ebe]" />
                <div className="mt-1.5 ml-0.5 border-t-2 border-dotted border-[#bbb]" />
              </td>
            </tr>
          ))}
          <tr>
            <td className="h-[26px] border-r border-[#d0d0d0]" />
            <td colSpan={6} className="border-b border-[#d0d0d0] bg-[#f0f0f0] p-0">
              <div className="flex items-center gap-2 pl-[9px] text-xs font-bold">
                <Chevron className="size-2.5 -rotate-90" />
                <Check label="Database" />
                Database
              </div>
            </td>
          </tr>
        </tbody>
      </table>
      <div className="mt-auto flex h-4 bg-[#f0f0f0] px-px">
        <button type="button" aria-label="Scroll left" className={`${scrollButton} w-4`}><Arrow className="h-1 w-1.5 -rotate-90" /></button>
        <span className="w-[251px] border border-[#ababab] bg-white" />
        <button type="button" aria-label="Scroll right" className={`${scrollButton} ml-auto w-4`}><Arrow className="h-1 w-1.5 rotate-90" /></button>
      </div>
      <div className="pointer-events-none absolute top-[109px] -right-[3px] left-[15px] h-[31px] border-3 border-[#f94144] shadow-[2px_3px_4px_rgba(0,0,0,0.4),inset_2px_3px_4px_rgba(0,0,0,0.3)]" />
    </div>
    <div className="mr-0.5 flex h-[22px] items-start">
      <button type="button" className="-mt-px h-[22px] w-[73px] border border-t-0 border-[#ababab] bg-[#f8f8f8] pl-1.5 text-left">Layers</button>
      <button type="button" className={`${panelTab} w-[72px] border-r-2 pl-1`}>Images</button>
      <button type="button" className={`${panelTab} w-[81px] border-r-2 pl-1.5`}>Materials</button>
      <button type="button" className={`${panelTab} flex-1 border-r pl-1.5`}>Surfaces</button>
    </div>
  </Panel>
);

const AlignmentPanel = () => (
  <Panel title="Alignment" className="flex-1">
    <div className="mr-px flex h-[30px] shrink-0 items-center gap-2.5 border border-[#ababab] bg-[#f0f0f0] pr-1 pl-1.5 text-xs">
      <button type="button" className="flex items-center gap-1">
        <svg viewBox="0 0 16 16" className="size-4">
          <rect x=".5" y=".5" width="14" height="14" fill="#dce8f6" stroke="#8aa6cc" />
          <path d="M3.500 3.500a3.500 3.500 0 0 1 5 4l6 6-1.500 1.500-6-6a3.500 3.500 0 0 1-4-4.500l2 2 1.500-.5.5-1z" fill="#a5b4c8" stroke="#43546e" strokeWidth=".8" />
        </svg>
        Settings
      </button>
      <button type="button" className="flex items-center gap-1"><SectionIcon className="size-4" />Preview</button>
      <button type="button" className="flex items-center gap-1">
        <svg viewBox="0 0 16 16" className="size-4">
          <path d="M6.500.5h7v9h-7z" fill="#d9efb0" stroke="#4f8a24" />
          <path d="M4.500 3.500h7v9h-7z" fill="#d9efb0" stroke="#4f8a24" />
          <path d="M1.500 6.500h7v9h-7z" fill="#e7f1fb" stroke="#4674a8" />
        </svg>
        Drawings
      </button>
      <Arrow className="ml-auto h-1 w-1.5 rotate-180 text-[#777]" />
    </div>
    <div className="mr-px mb-px flex-1 border-x border-b-2 border-[#ababab] bg-white">
      <table className="w-full table-fixed border-separate border-spacing-0 text-left">
        <colgroup>
          <col className="w-6" />
          <col className="w-5" />
          <col />
          <col className="w-10" />
          <col className="w-10" />
          <col className="w-10" />
          <col className="w-[25px]" />
          <col className="w-[25px]" />
        </colgroup>
        <thead className="bg-[#f8f8f8]">
          <tr>
            <th className={headCell} aria-label="Row" />
            <th className={`${headCell} text-center`}><Check state="on" label="All alignments" /></th>
            <th className={headCell}><SortLabel>Name</SortLabel></th>
            <th className={headCell} aria-label="Horizontal scale">
              <svg viewBox="0 0 16 16" className="ml-[3px] size-4">
                <rect x=".5" y="4" width="15" height="9" fill="#f3a743" stroke="#b87a30" />
                <path d="M3.500 13V9M6 13v-2M8.500 13V9M11 13v-2M13.500 13V9" stroke="#8d5a20" />
              </svg>
            </th>
            <th className={headCell} aria-label="Vertical scale">
              <svg viewBox="0 0 16 16" className="ml-[3px] size-4">
                <rect x="4" y=".5" width="9" height="15" fill="#f3a743" stroke="#b87a30" />
                <path d="M13 3.500H9M13 6h-2M13 8.500H9M13 11h-2M13 13.500H9" stroke="#8d5a20" />
              </svg>
            </th>
            <th className={headCell} aria-label="Width">
              <svg viewBox="0 0 16 16" className="ml-[3px] size-4" fill="none">
                <rect x="1" y="1.500" width="14" height="6" fill="#8fc5ec" stroke="#3673ab" />
                <path d="M1.500 9v6M14.500 9v6M2 12h12M5 10l-2.500 2L5 14M11 10l2.500 2-2.500 2" stroke="#2d4468" />
              </svg>
            </th>
            <th className={headCell}><Lock /></th>
            <th className="p-0"><Bulb on /></th>
          </tr>
        </thead>
        <tbody>
          <tr>
            <td className="h-[27px] border-t border-r border-t-[#ababab] border-r-[#d0d0d0]" />
            <td colSpan={7} className="border-t border-b border-t-[#ababab] border-b-[#d0d0d0] bg-[#e6e6e6] p-0">
              <div className="flex items-center gap-2 pl-[9px] text-xs font-bold">
                <Chevron className="size-2.5" />
                <Check state="on" label="Type: Plan & Section" />
                <span className="-ml-1">Type: Plan &amp; Section</span>
              </div>
            </td>
          </tr>
          <tr className="bg-[#e6e6e6]">
            <td className="border-r border-[#d0d0d0] bg-white p-0"><Arrow className="mx-auto h-1 w-2 rotate-90 text-[#888]" /></td>
            <td className={`${cell} text-center`}><Check state="on" label="Show A" /></td>
            <td className={`${cell} pl-1`}>A</td>
            <td className={`${cell} pr-[3px] text-right`}>500</td>
            <td className={`${cell} pr-[3px] text-right`}>1</td>
            <td className={`${cell} pr-[3px] text-right`}>1</td>
            <td className={cell}><Lock /></td>
            <td className="border-b border-[#d0d0d0] p-0"><Bulb /></td>
          </tr>
        </tbody>
      </table>
    </div>
  </Panel>
);

export default function App() {
  return (
    <div className="flex min-h-screen flex-col border-x border-b border-[#106ebe] bg-[#f8f8f8] font-['Liberation_Sans',sans-serif] text-[11px] text-[#444]">
      <div className="-mx-px"><TitleBar /></div>
      <Ribbon />

      <main className="mx-0.5 mt-px flex flex-1 flex-col border-x border-t border-[#d0d0d0]">
        <div className="flex flex-1">
          <SideTools />
          <div className="flex min-w-0 flex-1 flex-col pb-px">
            <View3D />
            <div className="flex h-2.5 items-center justify-center"><Arrow className="h-[3px] w-1.5 text-[#777]" /></div>
            <Log />
          </div>
          <div className="ml-0.5 flex w-[312px] shrink-0 flex-col gap-1 pt-0.5 pb-[3px]">
            <ModelPanel />
            <AlignmentPanel />
          </div>
          <button type="button" className="flex w-[29px] shrink-0 items-start pt-4 pl-2.5">
            <span className="[writing-mode:vertical-rl]">Properties</span>
          </button>
        </div>
        <footer className="flex h-[22px] items-center gap-3 border-y border-[#d0d0d0] bg-[#f0f0f0] pr-2.5 pl-2">
          <span>X=1573918.71</span>
          <span>Y=5181562.75</span>
          <span>Z=1.73</span>
          <span className="ml-auto">File: C:\Users\Public\Documents\Geroc\DATA\Projects\New Zealand\Demo 2a\Model\Demo 2a.mdlz</span>
          <span className="ml-1">Status: EDITABLE</span>
          <span className="ml-1">Scale Factor: 1</span>
        </footer>
      </main>

      <div className="flex h-[30px] items-start pl-0.5">
        <div className="flex h-[27px] w-[125px] items-center justify-between border-r border-b-2 border-r-[#d0d0d0] border-b-[#106ebe] pr-2.5 pl-3">
          <a href="#visualization" className="text-[#106ebe]">VISUALIZATION</a>
          <button type="button" aria-label="Close tab">
            <svg viewBox="0 0 8 8" className="size-[7px]" stroke="#777" strokeWidth="1.300"><path d="M1 1 7 7M7 1 1 7" /></svg>
          </button>
        </div>
      </div>
    </div>
  );
}
